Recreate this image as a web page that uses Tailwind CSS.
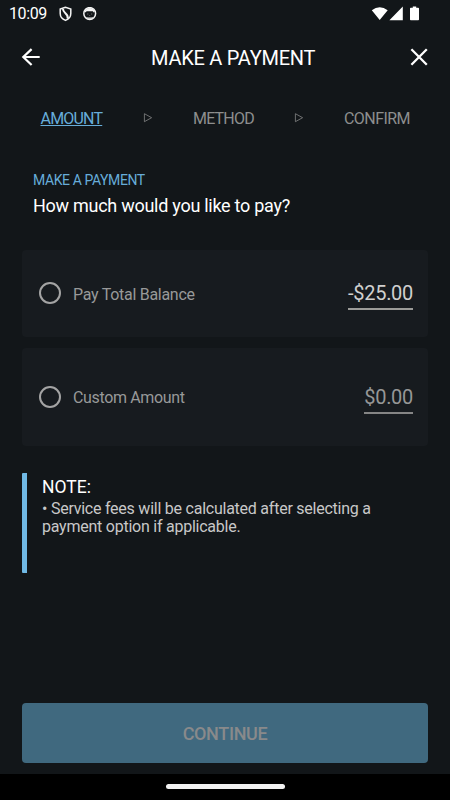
<!DOCTYPE html>
<html lang="en">
<head>
<meta charset="utf-8">
<title>Make a Payment</title>
<script src="https://cdn.jsdelivr.net/npm/@tailwindcss/browser@4"></script>
</head>
<body class="bg-[#121619] font-[Roboto,sans-serif] text-white">
<div class="flex h-[800px] w-[450px] flex-col overflow-hidden">
  <div class="flex h-[27px] shrink-0 items-center pl-[9px] pr-[29px]">
    <span class="w-[50px] text-[16px] leading-[27px] tracking-[-0.4px]">10:09</span>
    <svg class="h-[16px] w-[14px]" viewBox="0 0 14 16" fill="none" stroke="#f4f4f4"><path stroke-width="1.5" d="M6.5 1.3 1.2 3v4.5c0 3.2 2.2 5.7 5.3 6.9 3.1-1.2 5.3-3.7 5.3-6.9V3z"/><path stroke-width="2" d="M4 3c0 4.5 5.8 4.2 4.7 9.6"/></svg>
    <svg class="ml-[10px] h-[14px] w-[14px]" viewBox="0 0 14 14"><circle cx="6.7" cy="6.5" r="5.9" fill="none" stroke="#f4f4f4" stroke-width="1.5"/><path fill="#f4f4f4" d="M1.6 4.6Q3 1 6.7 1T11.8 4.6L10.8 5.4 9.8 4.2H3.6L2.6 5.4zM3 10Q6.7 11 10.4 10L9 11.8H4.4z"/><path fill="#777" d="M4.2 6.4h1.1v1.1H4.2zM8.1 6.4h1.1v1.1H8.1zM6.2 8.2h1v.8h-1z"/></svg>
    <div class="ml-auto flex items-center">
      <svg class="h-[16px] w-[50px]" viewBox="0 0 50 16" fill="#fff"><path d="M.8 4.2Q8.7-1.9 16.7 4.2L8.7 14zM18.4 14.3 31.8.6v13.7zM39.8 1.7h2V.5h3.4v1.2h2q.8 0 .8.8v11q0 .8-.8.8h-7.4q-.8 0-.8-.8v-11q0-.8.8-.8z"/></svg>
    </div>
  </div>
  <header class="flex h-[61px] shrink-0 items-center pl-[21px] pr-[21px]">
    <svg class="h-[20px] w-[20px]" viewBox="0 0 20 20" fill="none" stroke="#fff" stroke-width="2.2"><path d="M18.7 9H2M10.6 1.1 2.3 9l8.3 8"/></svg>
    <h1 class="ml-[110px] text-[20px] leading-[24px] tracking-[-0.25px]">MAKE A PAYMENT</h1>
    <svg class="ml-auto h-[20px] w-[20px]" viewBox="0 0 20 20" fill="none" stroke="#fff" stroke-width="2.3"><path d="m2.4 1.3 15.4 15.4m0-15.4L2.4 16.7"/></svg>
  </header>
  <nav class="flex h-[60px] shrink-0 items-center pl-[40.5px] pt-[2px] text-[16px] leading-[20px] tracking-[-0.8px] text-[#8d8e8e]">
    <span class="w-[102.5px] text-[#67add9] underline decoration-1 underline-offset-1">AMOUNT</span>
    <svg class="mb-[2px] h-[10px] w-[10px]" viewBox="0 0 10 10" fill="none" stroke="#858686" stroke-width=".8"><path d="M1.4.7v8l7.2-4z"/></svg>
    <span class="ml-[40px] w-[101px]">METHOD</span>
    <svg class="mb-[2px] h-[10px] w-[10px]" viewBox="0 0 10 10" fill="none" stroke="#858686" stroke-width=".8"><path d="M1.4.7v8l7.2-4z"/></svg>
    <span class="ml-[40px] tracking-[-0.55px]">CONFIRM</span>
  </nav>
  <main class="flex flex-1 flex-col px-[22px]">
    <div class="h-[102px] shrink-0 pl-[11px] pt-[23px]">
      <p class="text-[14px] leading-[18px] tracking-[-0.4px] text-[#67add9]">MAKE A PAYMENT</p>
      <h2 class="mt-[5px] text-[18px] leading-[24px] tracking-[-0.27px]">How much would you like to pay?</h2>
    </div>
    <label class="flex h-[87px] shrink-0 items-center rounded-[4px] bg-[#171b1f] pl-[17px] pr-[15px]">
      <span class="mb-[1px] h-[22px] w-[22px] rounded-full border-2 border-[#a4a4a4]"></span>
      <span class="ml-[12px] mt-[2px] text-[16px] leading-[24px] tracking-[-0.28px] text-[#989999]">Pay Total Balance</span>
      <span class="ml-auto flex h-[32px] w-[65px] justify-end whitespace-nowrap border-b-2 border-[#9b9b98] text-[20px] leading-[31px] tracking-[-0.3px] text-[#d0d0cf]">-$25.00</span>
    </label>
    <label class="mt-[11px] flex h-[98px] shrink-0 items-center rounded-[4px] bg-[#171b1f] pl-[17px] pr-[15px]">
      <span class="h-[22px] w-[22px] rounded-full border-2 border-[#a4a4a4]"></span>
      <span class="ml-[12px] mt-[2px] text-[16px] leading-[24px] tracking-[-0.35px] text-[#989999]">Custom Amount</span>
      <span class="ml-auto mt-[2px] flex h-[32px] w-[49px] justify-end border-b-2 border-[#858585] text-[20px] leading-[30px] tracking-[-0.3px] text-[#969797]">$0.00</span>
    </label>
    <section class="mt-[27px] h-[100px] shrink-0 rounded-[1px] border-l-[5px] border-[#70b9e5] pl-[15px] pt-[2px]">
      <h3 class="text-[17.5px] leading-[24px]">NOTE:</h3>
      <p class="mt-[1px] text-[16px] leading-[18px] tracking-[-0.24px] text-[#c8c8c8]">• Service fees will be calculated after selecting a<br>payment option if applicable.</p>
    </section>
    <button class="mb-[11px] mt-auto h-[60px] shrink-0 rounded-[4px] bg-[#40697f] text-[18px] font-medium tracking-[-0.35px] text-[#898a8b]">CONTINUE</button>
  </main>
  <footer class="flex h-[26px] shrink-0 justify-center bg-black pt-[10px]">
    <div class="h-[5px] w-[119px] rounded-full bg-[#f2f2f2]"></div>
  </footer>
</div>
</body>
</html>
